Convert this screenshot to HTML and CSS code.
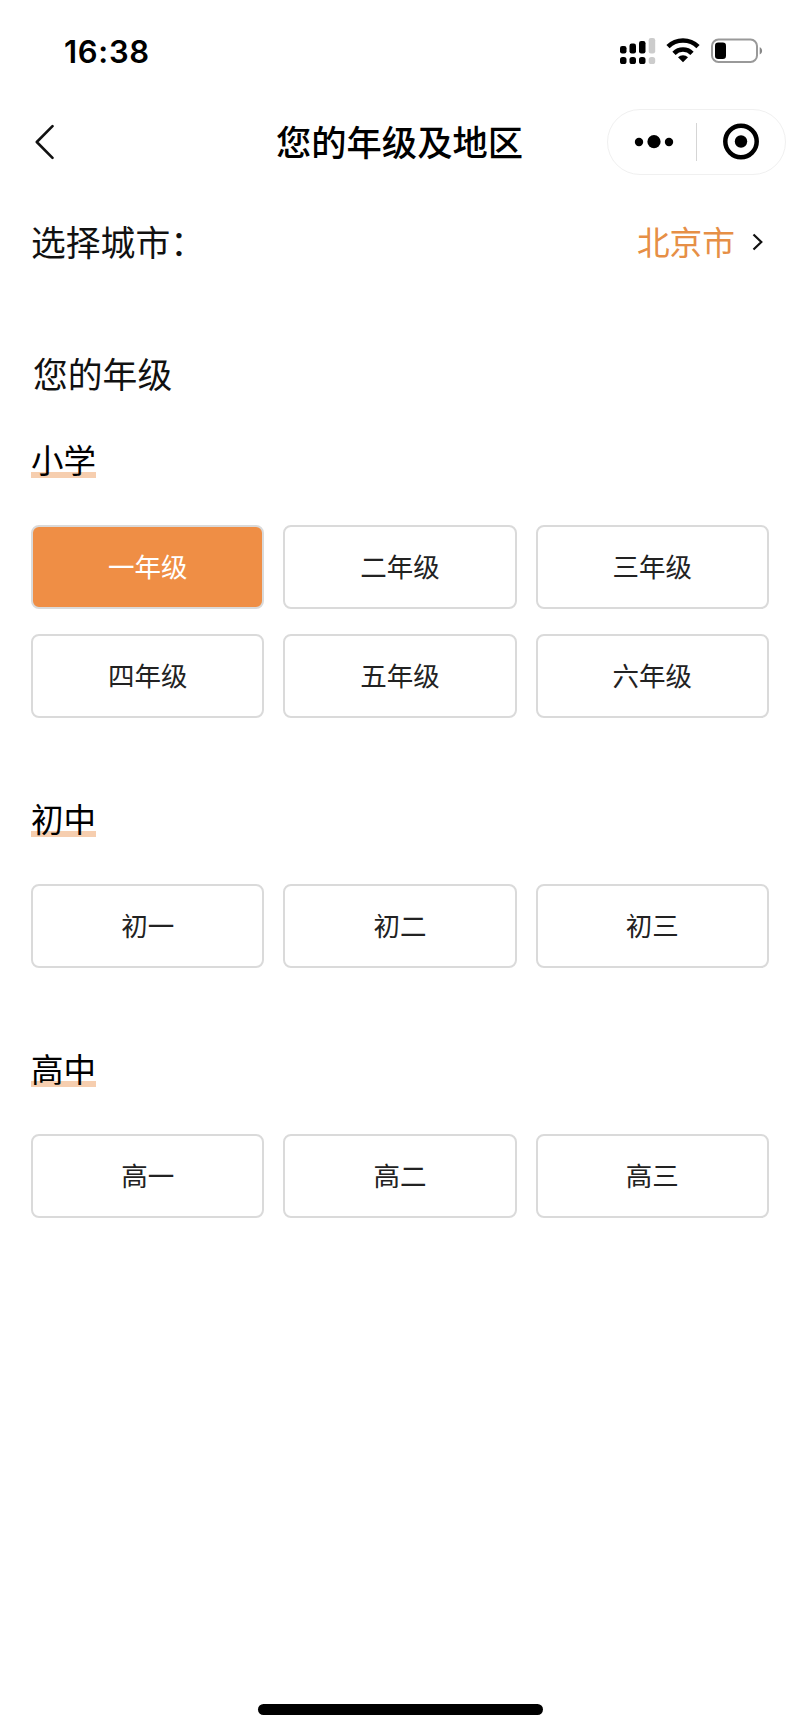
FILE: index.html
```
<!DOCTYPE html>
<html lang="zh-CN">
<head>
    <meta charset="UTF-8">
    <meta name="viewport" content="width=device-width, initial-scale=1.0">
    <title>您的年级及地区</title>
    <link rel="stylesheet" href="styles.css">
</head>
<body>
    <div class="status-bar">
        <span class="time">16:38</span>
        <div class="status-icons">
            <svg width="36" height="28" viewBox="0 0 36 28">
                <rect x="0" y="8" width="6.5" height="7.5" rx="2.2"/>
                <rect x="9.5" y="5.5" width="6.5" height="10" rx="2.2"/>
                <rect x="19" y="3" width="6.5" height="12.5" rx="2.2"/>
                <rect x="28.7" y="0" width="6.5" height="15.5" rx="2.2" fill="#ccc"/>
                <rect x="0" y="19" width="6.5" height="7" rx="2.6"/>
                <rect x="9.5" y="19" width="6.5" height="7" rx="2.6"/>
                <rect x="19" y="19" width="6.5" height="7" rx="2.6"/>
                <rect x="28.7" y="19" width="6.5" height="7" rx="2.6" fill="#ccc"/>
            </svg>
            <svg class="wifi" width="34" height="28" viewBox="0 0 34 28">
                <path d="M2 8.7a21.4 21.4 0 0 1 30 0M8 15.3a12.7 12.7 0 0 1 18 0" fill="none" stroke="#000" stroke-width="4.6"/>
                <path d="M17 24.3l-5-5.1a7.2 7.2 0 0 1 10 0z"/>
            </svg>
            <svg class="battery" width="52" height="28" viewBox="0 0 52 28">
                <rect x="1" y="1.6" width="45" height="22.3" rx="6.5" fill="none" stroke="#999" stroke-width="2"/>
                <rect x="4" y="4.5" width="11" height="16.5" rx="3.2"/>
                <path d="M48.7 9.2c3.2 1.2 3.2 6 0 7.2z" fill="#888"/>
            </svg>
        </div>
    </div>

    <div class="nav-bar">
        <svg class="back" width="20" height="36" viewBox="0 0 20 36">
            <path d="M17.500 2.200L1.800 18l15.700 15.800" fill="none" stroke="#111" stroke-width="2.6" stroke-linecap="round" stroke-linejoin="round"/>
        </svg>
        <h1>您的年级及地区</h1>
        <div class="capsule">
            <svg width="88" height="64" viewBox="0 0 88 64">
                <circle cx="31" cy="32" r="4.2"/>
                <circle cx="46" cy="31.7" r="6.6"/>
                <circle cx="61" cy="32" r="4.2"/>
            </svg>
            <span class="divider"></span>
            <svg width="88" height="64" viewBox="0 0 88 64">
                <circle cx="44" cy="31.5" r="15.7" fill="none" stroke="#000" stroke-width="4.5"/>
                <circle cx="44" cy="31.5" r="6.2"/>
            </svg>
        </div>
    </div>

    <div class="city-row">
        <span class="city-label">选择城市：</span>
        <span class="city-value">北京市</span>
        <svg width="12" height="20" viewBox="0 0 12 20">
            <path d="M1.500 2.500L9.300 10l-7.800 7.500" fill="none" stroke="#111" stroke-width="2.2"/>
        </svg>
    </div>

    <h2>您的年级</h2>

    <div class="section">
        <div class="section-title">小学</div>
        <div class="grade-list">
            <button class="grade active">一年级</button>
            <button class="grade">二年级</button>
            <button class="grade">三年级</button>
            <button class="grade">四年级</button>
            <button class="grade">五年级</button>
            <button class="grade">六年级</button>
        </div>
    </div>

    <div class="section">
        <div class="section-title">初中</div>
        <div class="grade-list">
            <button class="grade">初一</button>
            <button class="grade">初二</button>
            <button class="grade">初三</button>
        </div>
    </div>

    <div class="section">
        <div class="section-title">高中</div>
        <div class="grade-list">
            <button class="grade">高一</button>
            <button class="grade">高二</button>
            <button class="grade">高三</button>
        </div>
    </div>

    <div class="home-bar"></div>
</body>
</html>
```
FILE: styles.css
```
* {
    box-sizing: border-box;
}
body {
    margin: 0;
    height: 1731px;
    display: flex;
    flex-direction: column;
    background-color: #fff;
    color: #111;
    font-family: "Noto Sans CJK SC", sans-serif;
}
svg {
    display: block;
    flex-shrink: 0;
}
.status-bar {
    display: flex;
    justify-content: space-between;
    align-items: center;
    height: 102px;
    padding: 0 37px 0 64px;
}
.time {
    font-family: Inter, sans-serif;
    font-size: 31px;
    font-weight: 600;
    letter-spacing: 0.7px;
    color: #000;
}
.status-icons {
    display: flex;
    padding-top: 2px;
}
.wifi {
    margin-left: 10px;
}
.battery {
    margin-left: 11px;
}
.nav-bar {
    display: grid;
    grid-template-columns: 1fr auto 1fr;
    align-items: center;
    height: 80px;
    padding: 0 14px 0 35px;
}
h1 {
    margin: 0 0 0 -22px;
    padding-bottom: 3px;
    font-size: 35.3px;
    font-weight: 500;
    line-height: 50px;
    color: #000;
}
.capsule {
    display: flex;
    align-items: center;
    justify-self: end;
    height: 66px;
    border: 1.5px solid #f0f0f0;
    border-radius: 33px;
}
.divider {
    width: 1px;
    height: 38px;
    background-color: #d5d5d5;
}
.city-row {
    display: flex;
    align-items: center;
    height: 120px;
    padding: 0 36px 0 31px;
}
.city-label {
    flex: 1;
    padding-bottom: 2px;
    font-size: 34.8px;
}
.city-value {
    margin-right: 17px;
    padding-bottom: 3px;
    font-size: 32.7px;
    color: #e68f46;
}
h2 {
    margin: 46px 0 0 33px;
    font-size: 34.8px;
    font-weight: 400;
    line-height: 50px;
}
.section {
    padding: 0 31px;
    margin-bottom: 73px;
}
h2 + .section {
    margin-top: 34px;
}
.section-title {
    width: fit-content;
    height: 46px;
    margin-bottom: 47px;
    font-size: 32.5px;
    line-height: 53px;
    color: #000;
    background: linear-gradient(#f6ceaf, #f6ceaf) 0 100% / 100% 6px no-repeat;
}
.grade-list {
    display: grid;
    grid-template-columns: repeat(3, 1fr);
    gap: 25px 19px;
}
.grade {
    height: 84px;
    padding: 0 0 4px;
    border: 2px solid #dadada;
    border-radius: 8px;
    background-color: #fff;
    color: #222;
    font-family: inherit;
    font-size: 26.5px;
}
.grade.active {
    background-color: #ef8e45;
    color: #fff;
}
.home-bar {
    width: 285px;
    height: 11px;
    margin: auto auto 16px;
    border-radius: 6px;
    background-color: #000;
}
```
